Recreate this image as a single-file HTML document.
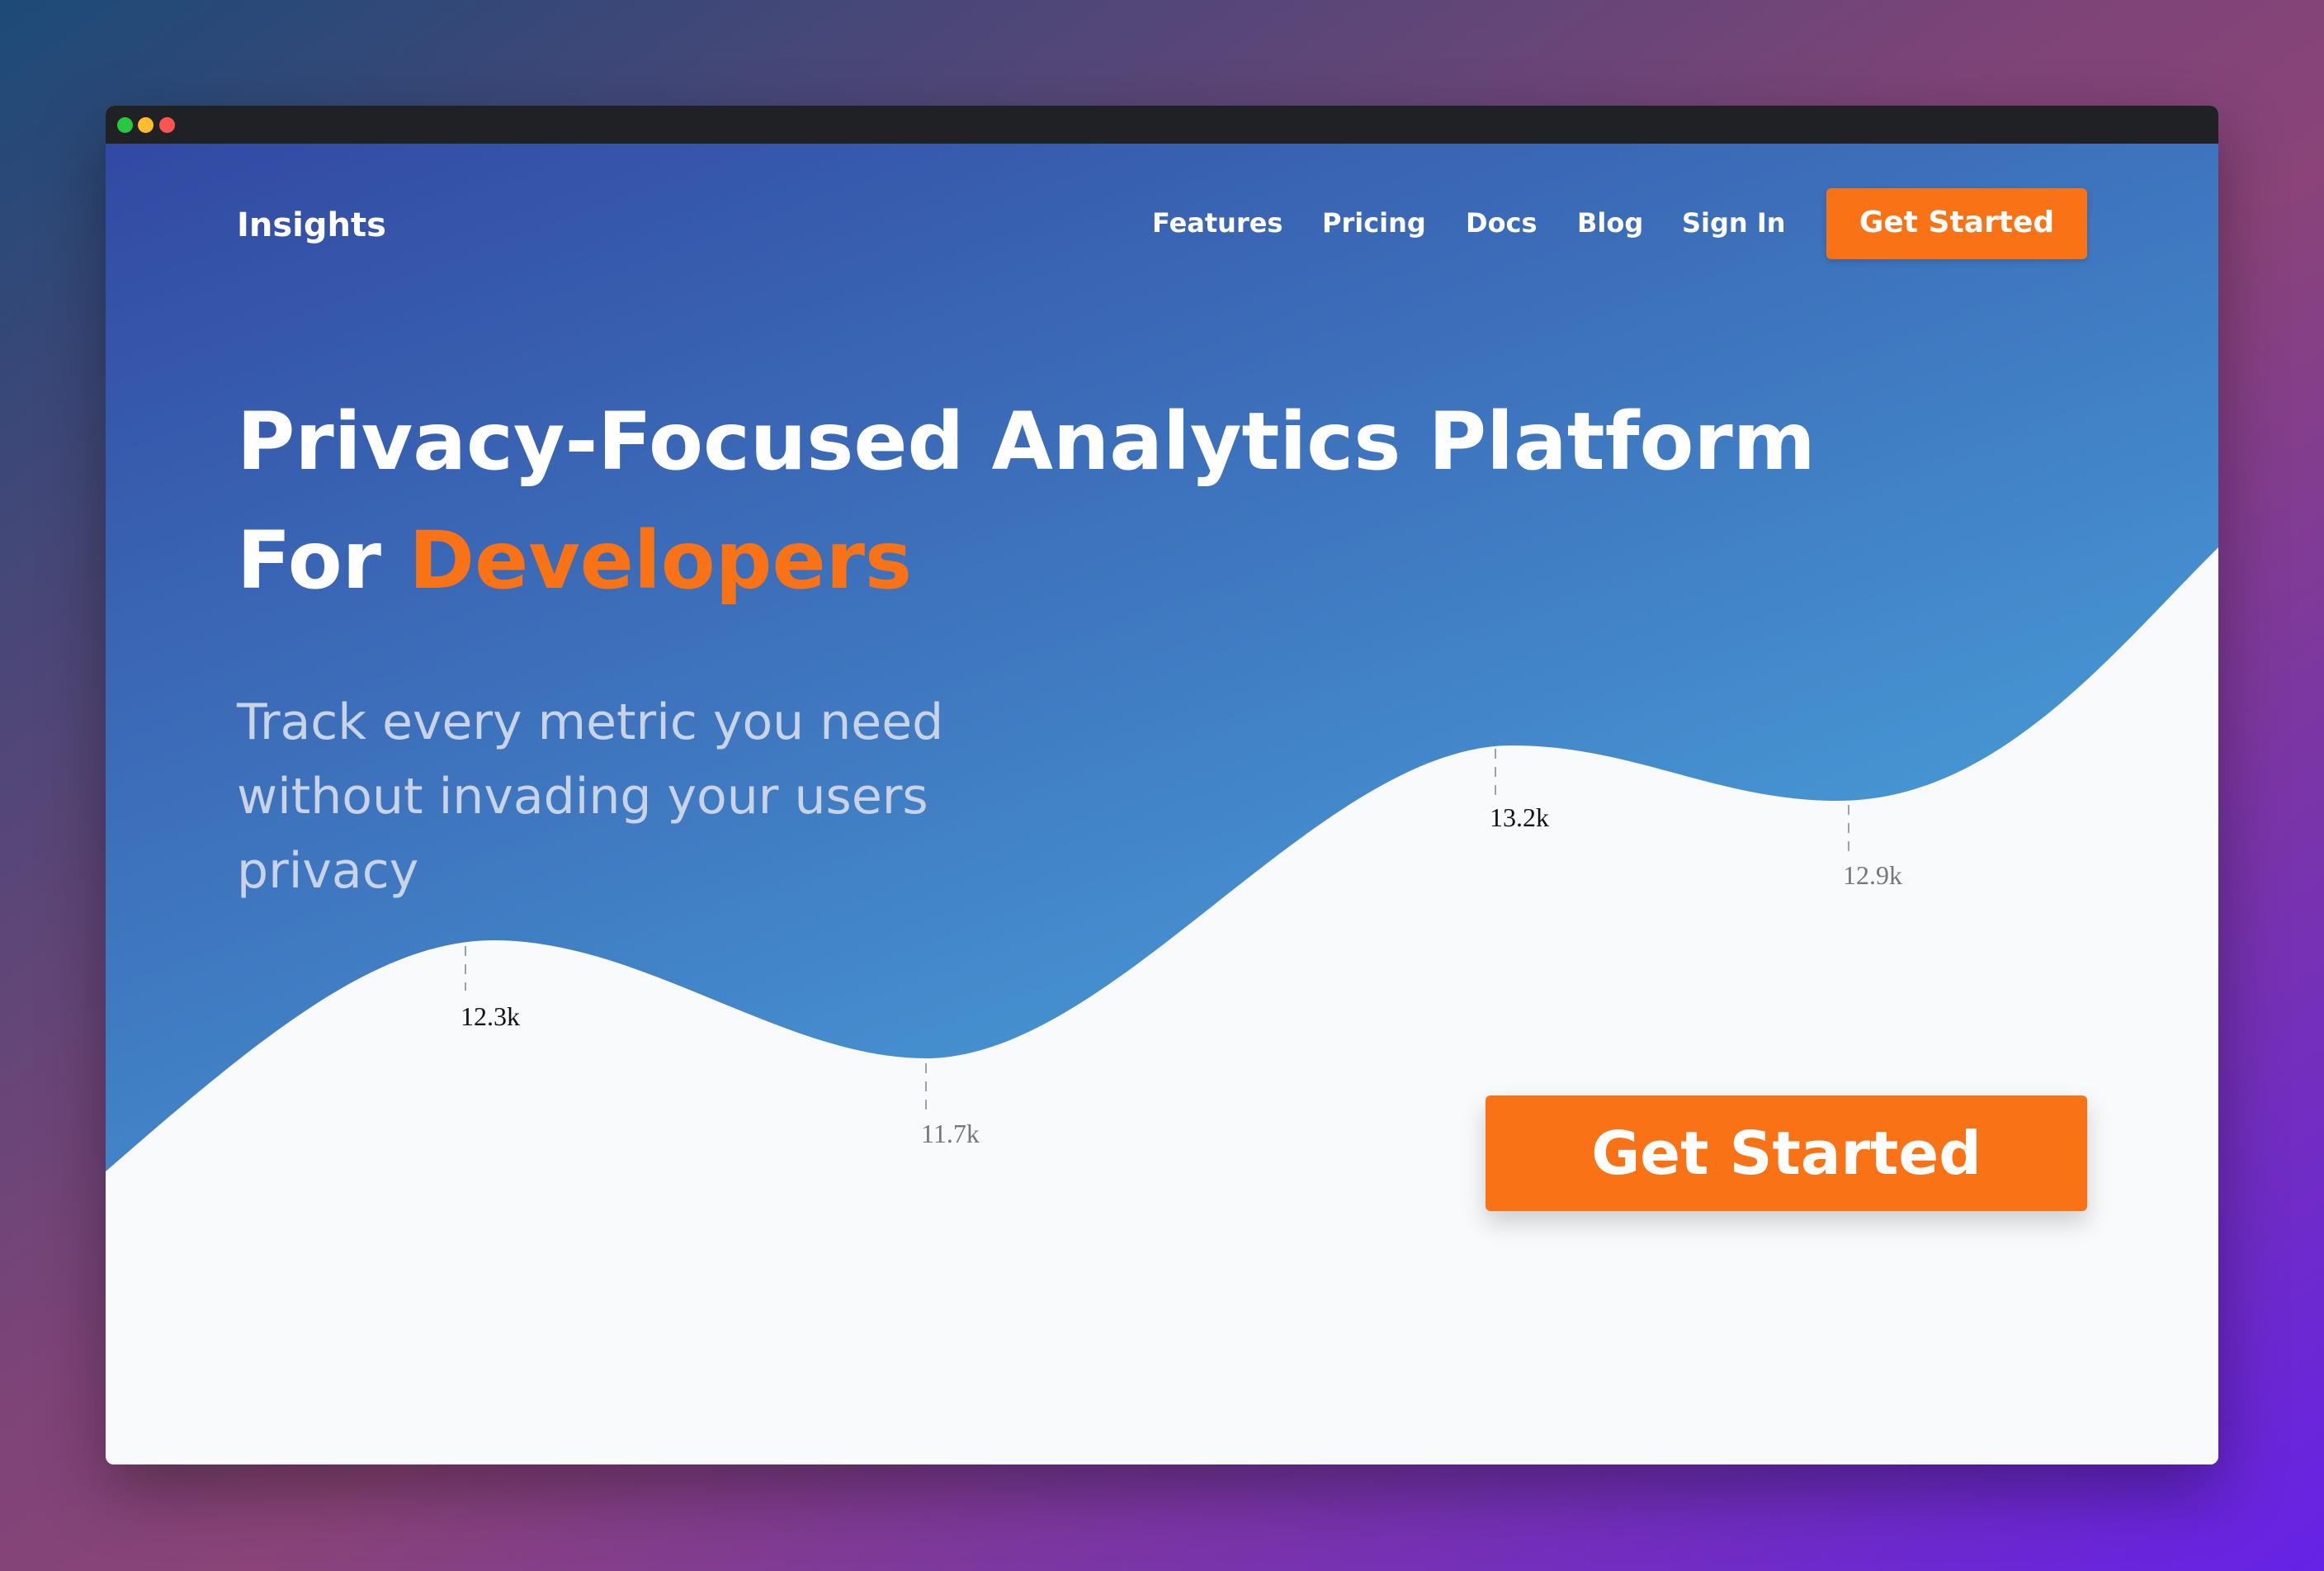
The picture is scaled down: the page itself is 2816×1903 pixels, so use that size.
<!DOCTYPE html>
<html><head><meta charset="utf-8"><style>
html,body{margin:0;padding:0}
body{width:2816px;height:1903px;position:relative;overflow:hidden;font-family:"DejaVu Sans","Liberation Sans",sans-serif;
background:linear-gradient(to bottom right,#1d4a78 0%,#7e4478 45%,#8a4478 55%,#6622e6 100%);}
.win{position:absolute;left:128px;top:128px;width:2560px;height:1646px;border-radius:10px;overflow:hidden;background:#f8fafc;box-shadow:0 30px 80px rgba(0,0,0,.35)}
.bar{position:absolute;left:0;top:0;width:100%;height:46px;background:#202125}
.dot{position:absolute;top:14px;width:19px;height:19px;border-radius:50%}
.hero{position:absolute;left:0;top:46px;width:100%;height:1600px;background:linear-gradient(160deg,#3249a3 0%,#3f78c0 40%,#4aa3dc 75%,#55b5e6 100%)}
svg{position:absolute;left:0;top:0}
.t{position:absolute;color:#fff;font-weight:bold;white-space:nowrap}
.btn{position:absolute;background:#f97316;border-radius:6px;color:#fff;font-weight:bold;text-align:center}
</style></head><body>
<div class="win">
<div class="hero"></div>
<svg width="2560" height="1646" viewBox="128 128 2560 1646">
<path d="M128,1419 C300,1270 450,1139 598,1139 C780,1139 950,1282 1122,1282 C1350,1282 1600,903 1832,903 C1980,903 2080,970 2227,970 C2420,970 2560,790 2688,663 L2688,1774 L128,1774 Z" fill="#f8fafc"/>
<g stroke="#9aa3ad" stroke-width="2" stroke-dasharray="12,10">
<line x1="564" y1="1146" x2="564" y2="1200"/>
<line x1="1122" y1="1288" x2="1122" y2="1347"/>
<line x1="1812" y1="907" x2="1812" y2="970"/>
<line x1="2240" y1="975" x2="2240" y2="1035"/>
</g>
<g font-family="Liberation Serif,serif" font-size="32">
<text x="558" y="1242" fill="#111">12.3k</text>
<text x="1116" y="1384" fill="#777">11.7k</text>
<text x="1805" y="1001" fill="#111">13.2k</text>
<text x="2233" y="1071" fill="#777">12.9k</text>
</g>
</svg>
<div class="bar"></div>
<div class="dot" style="left:14px;background:#28c840"></div>
<div class="dot" style="left:39px;background:#febc2e"></div>
<div class="dot" style="left:65px;background:#ff5452"></div>
<div class="t" style="left:159px;top:122px;font-size:40px">Insights</div>
<div class="t" style="left:1268px;top:123px;font-size:32px">Features</div>
<div class="t" style="left:1474px;top:123px;font-size:32px">Pricing</div>
<div class="t" style="left:1648px;top:123px;font-size:32px">Docs</div>
<div class="t" style="left:1783px;top:123px;font-size:32px">Blog</div>
<div class="t" style="left:1910px;top:123px;font-size:32px">Sign In</div>
<div class="btn" style="left:2085px;top:100px;width:316px;height:86px;line-height:84px;font-size:36px;box-shadow:0 3px 8px rgba(0,0,0,.15)">Get Started</div>
<div class="t" style="left:159px;top:335px;font-size:96px;line-height:144px">Privacy-Focused Analytics Platform<br>For <span style="color:#f97316">Developers</span></div>
<div style="position:absolute;left:159px;top:702px;font-size:60px;line-height:90px;color:#c9d3e6;width:1000px">Track every metric you need<br>without invading your users<br>privacy</div>
<div class="btn" style="left:1672px;top:1199px;width:729px;height:140px;line-height:140px;font-size:72px;box-shadow:0 14px 30px rgba(0,0,0,.18)">Get Started</div>
</div>
</body></html>
